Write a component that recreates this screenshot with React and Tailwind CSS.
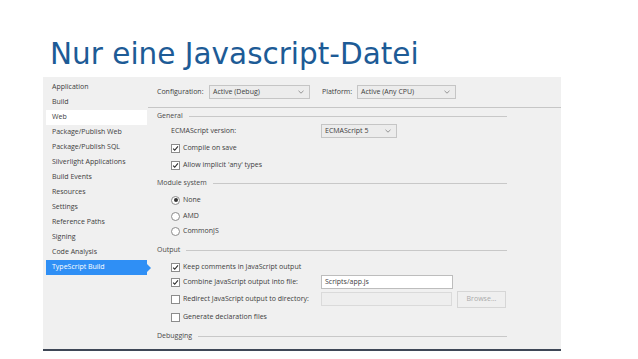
const sidebarItems = [
  "Application",
  "Build",
  "Web",
  "Package/Publish Web",
  "Package/Publish SQL",
  "Silverlight Applications",
  "Build Events",
  "Resources",
  "Settings",
  "Reference Paths",
  "Signing",
  "Code Analysis",
  "TypeScript Build",
];

function Chevron() {
  return (
    <svg width="6" height="4" viewBox="0 0 6 4" className="shrink-0">
      <path d="M0.5 0.8 L3 3.2 L5.5 0.8" fill="none" stroke="#8a8a8a" strokeWidth="0.9" />
    </svg>
  );
}

function Select({ value, className }) {
  return (
    <div className={`flex h-[14px] items-center justify-between border border-[#c5c5c5] bg-[#ececec] pl-[3px] pr-[5px] ${className}`}>
      <span>{value}</span>
      <Chevron />
    </div>
  );
}

function Check({ checked }) {
  return (
    <div className="flex h-[9px] w-[9px] shrink-0 items-center justify-center border border-[#8c8c8c] bg-white">
      {checked && (
        <svg width="7" height="7" viewBox="0 0 8 8">
          <path d="M1.3 4.2 L3.1 6 L6.8 1.6" fill="none" stroke="#2b2b2b" strokeWidth="1.3" />
        </svg>
      )}
    </div>
  );
}

function Radio({ checked }) {
  return (
    <div className="flex h-[9px] w-[9px] shrink-0 items-center justify-center rounded-full border border-[#8c8c8c] bg-white">
      {checked && <div className="h-[4px] w-[4px] rounded-full bg-[#333]" />}
    </div>
  );
}

function Section({ title, className }) {
  return (
    <div className={`flex h-[14px] items-center pl-[9px] pr-[54px] text-[#4a4a4a] ${className}`}>
      <span>{title}</span>
      <div className="ml-[6px] h-px flex-1 bg-[#c8c8c8]" />
    </div>
  );
}

function CheckRow({ label, checked, className, children }) {
  return (
    <div className={`flex h-[14px] items-center pl-[23px] ${className}`}>
      <div className="flex w-[150px] items-center gap-[3px]">
        <Check checked={checked} />
        <span>{label}</span>
      </div>
      {children}
    </div>
  );
}

function RadioRow({ label, checked, className }) {
  return (
    <div className={`flex h-[14px] items-center gap-[3px] pl-[23px] ${className}`}>
      <Radio checked={checked} />
      <span>{label}</span>
    </div>
  );
}

export default function App() {
  return (
    <div className="relative h-[359px] w-[638px] overflow-hidden bg-white">
      <h1 className="ml-[50px] mt-[39px] text-[29.5px] leading-[30px] text-[#1d5b96] [font-family:'DejaVu_Sans',sans-serif]">
        Nur eine Javascript-Datei
      </h1>

      <div className="ml-[43px] mt-[8px] flex h-[274px] w-[518px] border-b-2 border-[#3e4756] bg-[#f0f0f0] text-[7px] text-[#3d3d3d] [font-family:'Open_Sans',sans-serif]">
        {/* Sidebar */}
        <div className="flex w-[105px] flex-col pt-[3px]">
          {sidebarItems.map((item) => {
            const isWeb = item === "Web";
            const isActive = item === "TypeScript Build";
            return (
              <div key={item} className="flex h-[15px] items-center pl-[3px]">
                <div
                  className={`relative flex h-[15px] w-[101px] items-center pl-[6px] ${
                    isWeb ? "bg-white" : ""
                  } ${isActive ? "bg-[#2f8ff5] text-white" : ""}`}
                >
                  {item}
                  {isActive && (
                    <div className="absolute right-[-4px] top-[4px] h-0 w-0 border-y-[4px] border-l-[4px] border-y-transparent border-l-[#2f8ff5]" />
                  )}
                </div>
              </div>
            );
          })}
        </div>

        {/* Content */}
        <div className="flex flex-1 flex-col">
          <div className="flex h-[31px] items-center border-b border-[#c6c6c6] pl-[9px]">
            <span className="w-[52px]">Configuration:</span>
            <Select value="Active (Debug)" className="w-[101px]" />
            <span className="ml-[12px] w-[35px]">Platform:</span>
            <Select value="Active (Any CPU)" className="w-[99px]" />
          </div>

          <Section title="General" className="mt-[1px]" />
          <div className="mt-[1px] flex h-[14px] items-center pl-[23px]">
            <span className="w-[150px]">ECMAScript version:</span>
            <Select value="ECMAScript 5" className="w-[76px]" />
          </div>
          <CheckRow label="Compile on save" checked className="mt-[3px]" />
          <CheckRow label="Allow implicit 'any' types" checked className="mt-[3px]" />

          <Section title="Module system" className="mt-[4px]" />
          <RadioRow label="None" checked className="mt-[3px]" />
          <RadioRow label="AMD" className="mt-[2px]" />
          <RadioRow label="CommonJS" className="mt-[1px]" />

          <Section title="Output" className="mt-[5px]" />
          <CheckRow label="Keep comments in JavaScript output" checked className="mt-[3px]" />
          <CheckRow label="Combine JavaScript output into file:" checked className="mt-[1px]">
            <div className="flex h-[14px] w-[132px] items-center border border-[#bdbdbd] bg-white pl-[3px]">
              Scripts/app.js
            </div>
          </CheckRow>
          <CheckRow label="Redirect JavaScript output to directory:" className="mt-[3px]">
            <div className="h-[14px] w-[131px] border border-[#dadada] bg-[#eeeeee]" />
            <div className="ml-[5px] flex h-[17px] w-[49px] items-center justify-center border border-[#d6d6d6] bg-[#efefef] text-[#a9a9a9]">
              Browse...
            </div>
          </CheckRow>
          <CheckRow label="Generate declaration files" className="mt-[4px]" />

          <Section title="Debugging" className="mt-[5px]" />
        </div>
      </div>
    </div>
  );
}
